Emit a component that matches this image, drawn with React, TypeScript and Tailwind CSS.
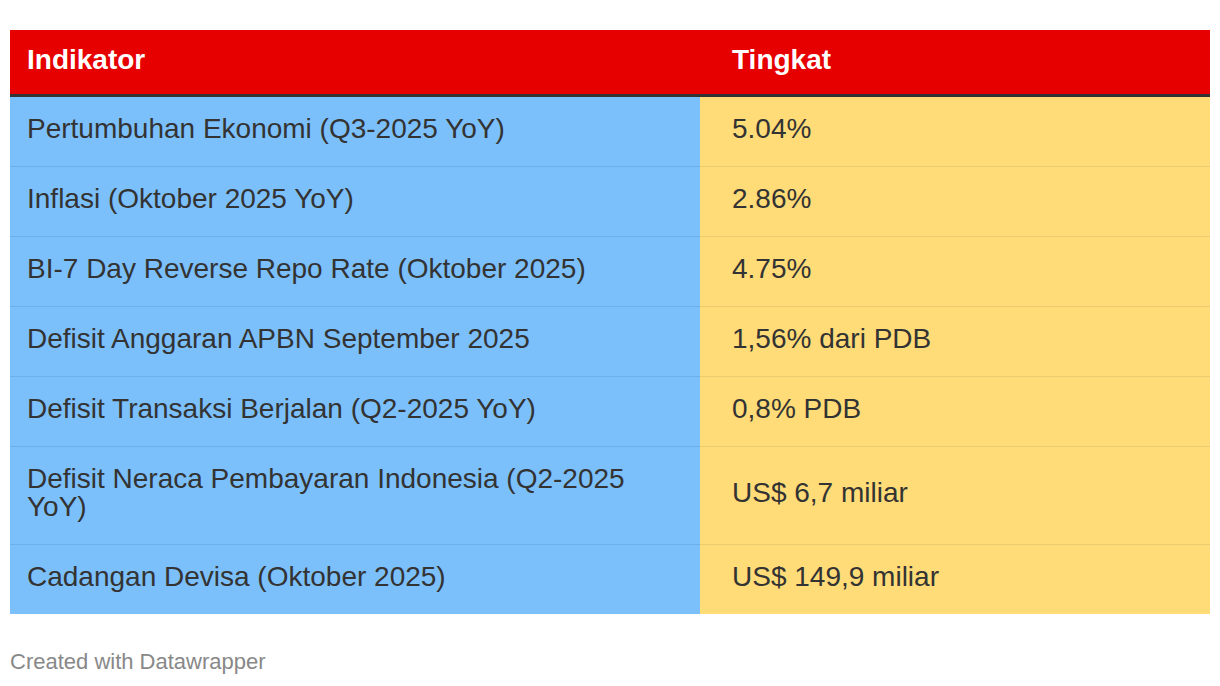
import React from "react";

const rows: [string, string][] = [
  ["Pertumbuhan Ekonomi (Q3-2025 YoY)", "5.04%"],
  ["Inflasi (Oktober 2025 YoY)", "2.86%"],
  ["BI-7 Day Reverse Repo Rate (Oktober 2025)", "4.75%"],
  ["Defisit Anggaran APBN September 2025", "1,56% dari PDB"],
  ["Defisit Transaksi Berjalan (Q2-2025 YoY)", "0,8% PDB"],
  ["Defisit Neraca Pembayaran Indonesia (Q2-2025 YoY)", "US$ 6,7 miliar"],
  ["Cadangan Devisa (Oktober 2025)", "US$ 149,9 miliar"],
];

export default function App() {
  return (
    <div
      className="w-[1220px] h-[686px] bg-white px-[10px] pt-[30px]"
      style={{ fontFamily: '"Liberation Sans", Arial, sans-serif' }}
    >
      <div className="flex flex-col">
        <div className="flex bg-[#e60000] border-b-[3px] border-[#333333] text-white font-bold text-[28px] leading-[28px]">
          <div className="w-[690px] pl-[17px] pt-[16px] pb-[20px]">Indikator</div>
          <div className="flex-1 pl-[32px] pt-[16px] pb-[20px]">Tingkat</div>
        </div>
        {rows.map(([a, b], i) => {
          const last = i === rows.length - 1;
          return (
            <div key={i} className="flex text-[28px] leading-[28px] text-[#333333]">
              <div
                className={
                  "w-[690px] bg-[#7cc0fb] pl-[17px] pr-[20px] pt-[18px] pb-[23px] flex items-center " +
                  (last ? "" : "border-b border-[#6cb0ea]")
                }
              >
                {a}
              </div>
              <div
                className={
                  "flex-1 bg-[#ffdc78] pl-[32px] pr-[20px] pt-[18px] pb-[23px] flex items-center " +
                  (last ? "" : "border-b border-[#ebcb70]")
                }
              >
                {b}
              </div>
            </div>
          );
        })}
      </div>
      <div className="mt-[36px] text-[22px] leading-[24px] text-[#888888]">Created with Datawrapper</div>
    </div>
  );
}
